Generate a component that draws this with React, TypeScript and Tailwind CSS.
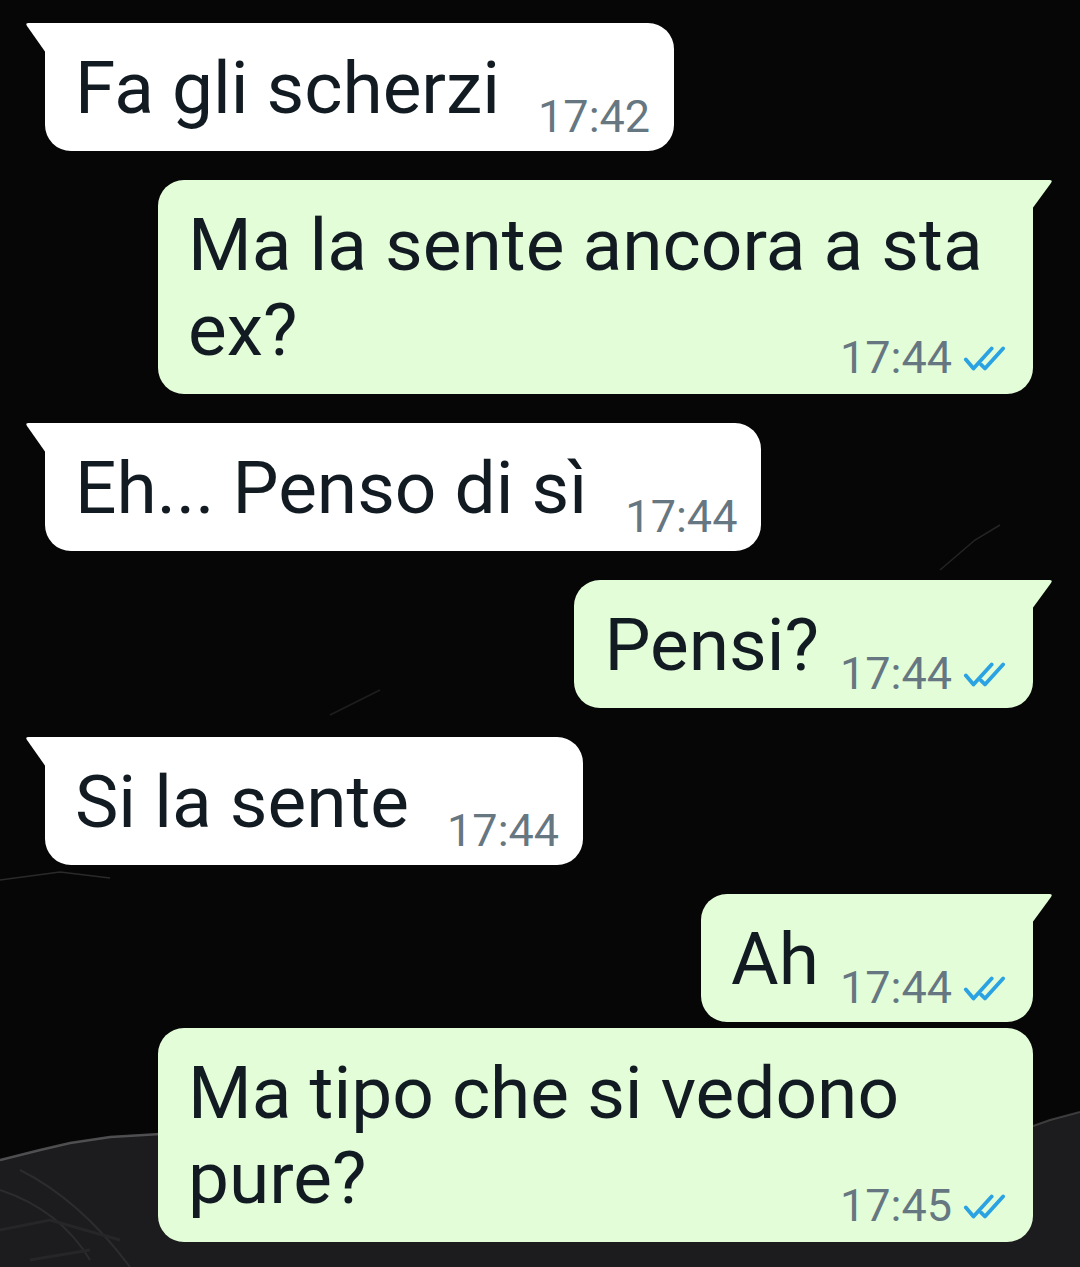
import clsx from 'clsx'

type Msg = { text: string; time: string; out?: boolean; tail?: boolean; wide?: boolean }

const messages: Msg[] = [
  { text: 'Fa gli scherzi', time: '17:42', tail: true },
  { text: 'Ma la sente ancora a sta ex?', time: '17:44', out: true, tail: true, wide: true },
  { text: 'Eh... Penso di sì', time: '17:44', tail: true },
  { text: 'Pensi?', time: '17:44', out: true, tail: true },
  { text: 'Si la sente', time: '17:44', tail: true },
  { text: 'Ah', time: '17:44', out: true, tail: true },
  { text: 'Ma tipo che si vedono pure?', time: '17:45', out: true, wide: true },
]

function Ticks() {
  return (
    <svg viewBox="0 0 44 26" className="w-[42px] h-[25px] ml-[11px] mt-[1px]" fill="none">
      <path d="M3 14 L11 23.5 L30 2.5" stroke="#2ba2e2" strokeWidth="4" strokeLinecap="round" strokeLinejoin="round" />
      <path d="M19 19.5 L23 23.5 L42 2.5" stroke="#2ba2e2" strokeWidth="4" strokeLinecap="round" strokeLinejoin="round" />
    </svg>
  )
}

function Meta({ m }: { m: Msg }) {
  return (
    <div className="flex items-center shrink-0">
      <span className="text-[45px] leading-[44px] text-[#667781]">{m.time}</span>
      {m.out && <Ticks />}
    </div>
  )
}

function Tail({ out }: { out?: boolean }) {
  if (out) {
    return (
      <svg viewBox="0 0 21 29" className="absolute -right-[20px] top-0 w-[21px] h-[29px] fill-[#e4fdd9]">
        <path d="M0 0 H17.5 Q21 0 19 3 L0 29 Z" />
      </svg>
    )
  }
  return (
    <svg viewBox="0 0 21 30" className="absolute -left-[20px] top-0 w-[21px] h-[30px] fill-white">
      <path d="M21 0 H3.5 Q0 0 2 3 L21 30 Z" />
    </svg>
  )
}

function Bubble({ m, first }: { m: Msg; first: boolean }) {
  return (
    <div
      className={clsx(
        'relative rounded-[26px] text-[#111b21]',
        m.out ? 'bg-[#e4fdd9] self-end mr-[47px]' : 'bg-white self-start ml-[45px]',
        m.tail && (m.out ? 'rounded-tr-none' : 'rounded-tl-none'),
        m.wide && 'w-[875px]',
        first ? '' : m.tail ? 'mt-[29px]' : 'mt-[6px]'
      )}
    >
      {m.tail && <Tail out={m.out} />}
      {m.wide ? (
        <div className="pl-[30px] pr-[28px] pt-[23px] pb-[14px]">
          <div className="text-[73px] leading-[85px]">{m.text}</div>
          <div className="flex justify-end -mt-[37px]">
            <Meta m={m} />
          </div>
        </div>
      ) : (
        <div className={clsx('flex items-end pl-[30px] pt-[23px] pb-[12px]', m.out ? 'pr-[28px]' : 'pr-[24px]')}>
          <span className="text-[73px] leading-[85px] mb-[8px] whitespace-nowrap">{m.text}</span>
          <div className={m.out ? 'ml-[21px]' : 'ml-[38px]'}>
            <Meta m={m} />
          </div>
        </div>
      )}
    </div>
  )
}

export default function App() {
  return (
    <div
      className="relative w-full h-[1267px] overflow-hidden bg-[#060606]"
      style={{ fontFamily: 'Roboto, "Noto Sans", sans-serif' }}
    >
      {/* backdrop: rock at the bottom and a few faint cracks */}
      <svg viewBox="0 0 1080 1267" className="absolute inset-0 w-full h-full" preserveAspectRatio="none">
        <path d="M0 1160 L40 1150 L70 1143 L110 1137 L160 1134 L600 1130 L1033 1126 L1050 1120 L1080 1112 L1080 1267 L0 1267 Z" fill="#1c1c1e" />
        <path d="M0 1160 L40 1150 L70 1143 L110 1137 L160 1134" stroke="#6a6a6c" strokeWidth="2.5" fill="none" opacity="0.7" />
        <path d="M1033 1126 L1050 1120 L1080 1112" stroke="#5a5a5c" strokeWidth="2" fill="none" opacity="0.6" />
        <path d="M0 1190 Q60 1210 90 1260 M20 1170 Q80 1200 130 1267" stroke="#2c2c2e" strokeWidth="2" fill="none" />
        <path d="M0 1230 L50 1220 L120 1240 M30 1260 L90 1250" stroke="#262628" strokeWidth="3" fill="none" />
        <path d="M0 880 L60 872 L110 878" stroke="#2a2a2a" strokeWidth="1.5" fill="none" />
        <path d="M940 570 L975 540 L1000 525" stroke="#242424" strokeWidth="1.5" fill="none" />
        <path d="M330 715 L380 690" stroke="#1e1e1e" strokeWidth="1.5" fill="none" />
      </svg>
      <div className="relative flex flex-col pt-[23px]">
        {messages.map((m, i) => (
          <Bubble key={i} m={m} first={i === 0} />
        ))}
      </div>
    </div>
  )
}
